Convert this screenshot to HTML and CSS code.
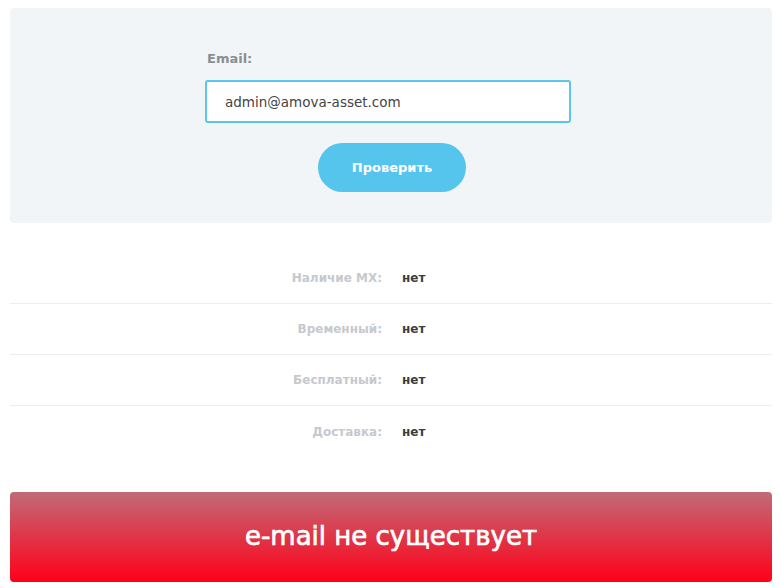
FILE: index.html
```html
<!DOCTYPE html>
<html>
<head>
  <title>Проверка email</title>
  <link rel="stylesheet" href="styles.css">
</head>
<body>
  <div class="check-box">
    <form class="check-form" onsubmit="return false">
      <label for="email">Email:</label>
      <input type="text" id="email" value="admin@amova-asset.com">
      <button type="submit">Проверить</button>
    </form>
  </div>

  <div class="results">
    <div class="row">
      <span class="label">Наличие MX:</span>
      <span class="value">нет</span>
    </div>
    <div class="row">
      <span class="label">Временный:</span>
      <span class="value">нет</span>
    </div>
    <div class="row">
      <span class="label">Бесплатный:</span>
      <span class="value">нет</span>
    </div>
    <div class="row">
      <span class="label">Доставка:</span>
      <span class="value">нет</span>
    </div>
  </div>

  <div class="verdict">e-mail не существует</div>
</body>
</html>
```

FILE: styles.css
```css
body {
  font-family: 'DejaVu Sans', sans-serif;
  margin: 8px 9px 0 10px;
  background: #fff;
  color: #333;
}
.check-box {
  background: #f2f5f7;
  border-radius: 4px;
  padding: 42px 6px 31px 0;
}
.check-form {
  width: 366px;
  margin: 0 auto;
  display: flex;
  flex-direction: column;
}
.check-form label {
  font-size: 13px;
  font-weight: bold;
  color: #8a8f94;
  margin-left: 2px;
  line-height: 17px;
}
.check-form input {
  margin-top: 13px;
  height: 43px;
  box-sizing: border-box;
  border: 2px solid #5bc5ee;
  border-radius: 3px;
  padding: 0 18px;
  font-family: inherit;
  font-size: 13.5px;
  color: #444;
  background: #fff;
  outline: none;
}
.check-form button {
  align-self: center;
  margin-top: 20px;
  margin-left: 8px;
  width: 148px;
  height: 49px;
  border: none;
  border-radius: 25px;
  background: #55c5ed;
  color: #fff;
  font-family: inherit;
  font-size: 13px;
  font-weight: bold;
  cursor: pointer;
}
.results {
  margin-top: 30px;
}
.row {
  display: grid;
  grid-template-columns: 372px 1fr;
  column-gap: 20px;
  align-items: center;
  height: 50px;
  border-bottom: 1px solid #eceef0;
  font-size: 12px;
  font-weight: bold;
}
.row:last-child {
  border-bottom: none;
  height: 51px;
}
.label {
  text-align: right;
  color: #c5c9ce;
}
.value {
  color: #3a3d40;
}
.verdict {
  margin-top: 35px;
  height: 90px;
  border-radius: 4px;
  background: linear-gradient(#c06b78, #ff0018);
  color: #fff;
  font-size: 26px;
  font-weight: normal;
  -webkit-text-stroke: 0.7px #fff;
  display: flex;
  align-items: center;
  justify-content: center;
  padding-bottom: 3px;
  box-sizing: border-box;
}
```
